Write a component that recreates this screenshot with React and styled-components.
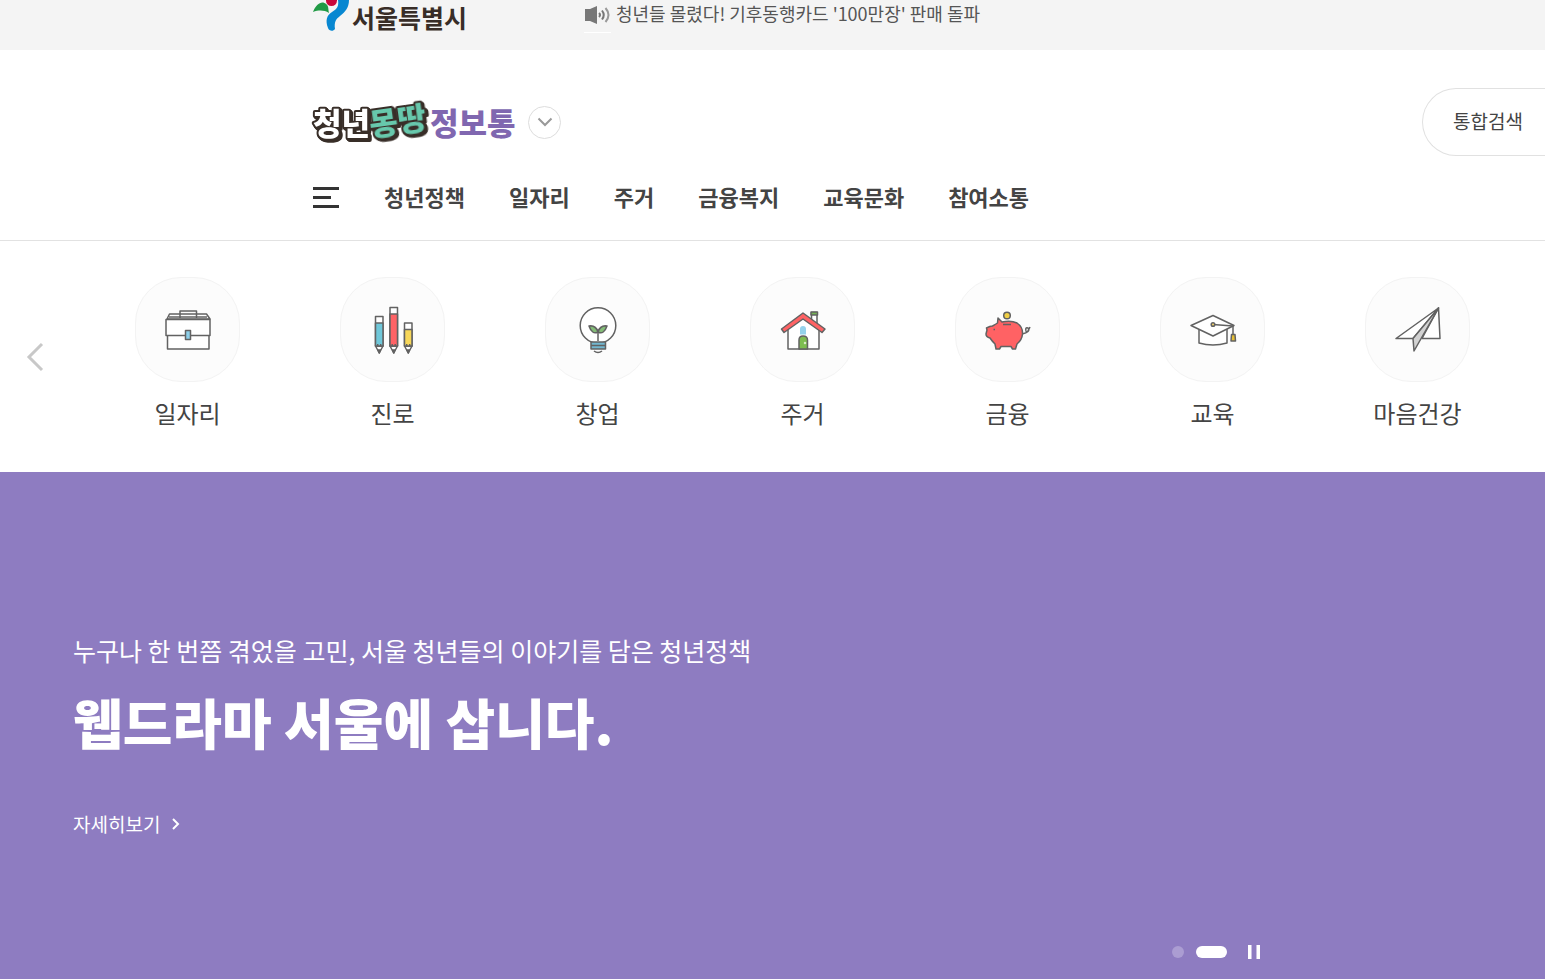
import React from "react";
import styled, { createGlobalStyle } from "styled-components";

const GlobalStyle = createGlobalStyle`
  *, *::before, *::after { box-sizing: border-box; }
  html, body, #root { margin: 0; min-height: 100vh; }
  body {
    background: #fff;
    color: #444;
    font-family: "Noto Sans CJK KR", "Noto Sans", sans-serif;
  }
  a { color: inherit; text-decoration: none; }
  button { padding: 0; border: 0; background: none; font: inherit; color: inherit; cursor: pointer; }
  ul { list-style: none; margin: 0; padding: 0; }
  svg { display: block; }
`;

const Page = styled.div`
  display: flex;
  flex-direction: column;
  min-height: 100vh;
  overflow-x: hidden;
`;

const TopBar = styled.div`
  display: flex;
  align-items: flex-start;
  height: 50px;
  padding-left: 313px;
  background: #f4f4f4;
`;

const CityLink = styled.a`
  display: flex;
  gap: 3px;
  width: 271px;
  height: 34px;
  color: #382d27;
  font-size: 25px;
  font-weight: 700;
  line-height: 34px;
  white-space: nowrap;
`;

const NewsLink = styled.a`
  display: flex;
  gap: 5px;
  color: #555;
  font-size: 18px;
  line-height: 26px;
  white-space: nowrap;
`;

const NewsMark = styled.span`
  width: 27px;
  height: 33px;
  border-bottom: 1px solid #fff;
`;

const Header = styled.header`
  padding: 38px 0 0 313px;
  border-bottom: 1px solid #e2e2e2;
`;

const BrandRow = styled.div`
  display: flex;
  align-items: center;
  height: 68px;
`;

const SiteToggle = styled.button`
  display: grid;
  place-items: center;
  width: 33px;
  height: 33px;
  margin-left: 14px;
  border: 1px solid #ddd;
  border-radius: 50%;
`;

const SearchButton = styled.button`
  width: 123px;
  height: 68px;
  margin-left: auto;
  padding: 0 0 4px 30px;
  border: 1px solid #e1e1e1;
  border-right: 0;
  border-radius: 34px 0 0 34px;
  font-size: 19px;
  text-align: left;
  white-space: nowrap;
`;

const Nav = styled.nav`
  display: flex;
  align-items: center;
  height: 84px;
  padding-bottom: 2px;
`;

const MenuButton = styled.button`
  width: 26px;
  margin-right: 45px;
`;

const NavList = styled.ul`
  display: flex;
  gap: 44px;
  padding-bottom: 2px;
  font-size: 22px;
  font-weight: 700;
  line-height: 30px;
  white-space: nowrap;
`;

const Topics = styled.section`
  display: flex;
  align-items: center;
  height: 231px;
  padding-right: 25px;
`;

const PrevButton = styled.button`
  display: grid;
  place-items: center;
  flex: none;
  width: 69px;
  height: 48px;
  margin-right: 16px;
`;

const TopicList = styled.ul`
  display: grid;
  grid-template-columns: repeat(7, 1fr);
  flex: 1;
  padding-bottom: 6px;
`;

const TopicLink = styled.a`
  display: flex;
  flex-direction: column;
  align-items: center;
  gap: 14px;
  font-size: 24px;
  line-height: 34px;
  white-space: nowrap;
`;

const TopicIcon = styled.span`
  width: 105px;
  height: 105px;
  border: 1px solid #f3f3f3;
  border-radius: 46px;
  background: #fcfcfc;
`;

const Hero = styled.section`
  display: flex;
  flex: 1;
  flex-direction: column;
  justify-content: space-between;
  padding: 158px 285px 20px 73px;
  background: #8e7cc1;
  color: #fff;
`;

const HeroLead = styled.p`
  margin: 0;
  font-size: 25px;
  line-height: 40px;
`;

const HeroTitle = styled.h1`
  margin: 14px 0 46px;
  font-size: 54px;
  font-weight: 900;
  line-height: 76px;
`;

const MoreLink = styled.a`
  display: inline-flex;
  align-items: center;
  gap: 12px;
  font-size: 19px;
  line-height: 36px;
`;

const Controls = styled.div`
  display: flex;
  align-items: center;
  justify-content: flex-end;
  gap: 12px;
`;

const Dot = styled.button`
  width: ${(p) => (p.$active ? 31 : 12)}px;
  height: 12px;
  border-radius: 6px;
  background: ${(p) => (p.$active ? "#fff" : "#ab9dd2")};
`;

const PauseButton = styled.button`
  width: 12px;
  height: 14px;
  margin-left: 9px;
`;

const LogoSvg = styled.svg`
  overflow: visible;
  font-weight: 900;

  .outlined {
    stroke: #382e28;
    stroke-width: 4px;
    stroke-linejoin: round;
    paint-order: stroke;
    filter: drop-shadow(1px 1px 0 #382e28) drop-shadow(1px 1px 0 #382e28);
  }
`;

const CityMark = () => (
  <svg width="36" height="32" viewBox="0 0 36 32" aria-hidden="true">
    <path d="M0 12C3 4 9 0 13 4C16 6 15 9 16 13C11 10 6 10 0 12Z" fill="#219a45" />
    <circle cx="18.5" cy="0.5" r="5.5" fill="#c9073a" />
    <path d="M25 0H36C36 8 32 12 27 16C23 19 21 22 22 29C20 32 16 31 15 28C12 20 14 15 19 12C24 9 26 6 25 0Z" fill="#0787d1" />
  </svg>
);

const Speaker = () => (
  <svg width="27" height="30" viewBox="0 0 27 30" fill="none" stroke="#777" aria-hidden="true">
    <path d="M1 9H6L13 6V24L6 21H1Z" fill="#777" stroke="none" />
    <path d="M15 13Q17 15 15 17" strokeWidth="2" />
    <path d="M18 10.5Q21.500 15 18 19.500" strokeWidth="2" />
    <path d="M21.500 8Q27.500 15 21.500 22" strokeWidth="2" stroke="#999" />
  </svg>
);

const BrandLogo = () => (
  <LogoSvg width="201" height="48" viewBox="0 0 201 48" fontSize="31" role="img" aria-label="청년몽땅정보통">
    <text className="outlined" x="0" y="37" fill="#fff">청년</text>
    <text className="outlined" x="58" y="38" fill="#67c8ac" transform="rotate(-8 58 38)">몽땅</text>
    <text x="117" y="37" fill="#8067b0">정보통</text>
  </LogoSvg>
);

const pencil = (x, top, color) => (
  <g key={x}>
    <path d={`M${x} 69L${x + 3.75} 76L${x + 7.5} 69Z`} fill="#fff" />
    <path d={`M${x + 2.5} 73L${x + 3.75} 76L${x + 5} 73Z`} fill="#555" />
    <path d={`M${x} ${top}H${x + 7.5}V69H${x}Z`} fill="#fff" />
    <path d={`M${x} ${top + 6.500}H${x + 7.5}V69H${x}Z`} fill={color} />
    <path d={`M${x + 2.2} 69V67M${x + 5.2} 69V67`} />
  </g>
);

const drawings = {
  job: (
    <>
      <path d="M32 42L34.500 37H71.500L75 42Z" fill="#fff" />
      <path d="M45 41V34H61.500V41M34 40H72" />
      <path d="M32.500 58H74V72H32.500Z" fill="#fff" />
      <path d="M31 42.500H75V58.500H31Z" fill="#fff" />
      <path d="M50.500 53.500H55.500V62.500H50.500Z" fill="#8dcfe9" />
    </>
  ),
  career: (
    <>
      {pencil(35.5, 39.5, "#6fc7d9")}
      {pencil(50, 30.5, "#ff6366")}
      {pencil(64.5, 46, "#f7d759")}
    </>
  ),
  startup: (
    <>
      <circle cx="53" cy="48.500" r="17.800" fill="#fff" />
      <path d="M53 64V54M49 74Q53 77 57 74" />
      <path d="M53 55Q47 58 44 49Q51 48 53 55ZM53 55Q59 58 62 49Q55 48 53 55Z" fill="#84bd78" />
      <path d="M46 65H60.500V72H46Z" fill="#73b7cf" />
      <path d="M46 68.500H60.500" />
    </>
  ),
  home: (
    <>
      <path d="M61.500 35.500H67V48H61.500Z" fill="#fff" />
      <path d="M61 35H67.500V38H61Z" fill="#76b455" />
      <path d="M38 51L53 40L69 51V72H38Z" fill="#fff" />
      <path d="M31.500 52L53 36L75 52L72 55.500L53 42L34 55.500Z" fill="#ff6264" />
      <path d="M50 57.500V52Q50 49 53 49Q56 49 56 52V57.500Z" fill="#94d2eb" stroke="none" />
      <path d="M49 72V63Q49 59 53 59Q57.500 59 57.500 63V72Z" fill="#7dbd50" />
      <circle cx="55" cy="66" r="0.500" stroke="#dcecc9" />
    </>
  ),
  finance: (
    <>
      <circle cx="52" cy="38.500" r="3.300" fill="#f0cf45" />
      <path d="M67 57Q76 55 73 51Q70 50 71 54Q72 57 75 50" />
      <path d="M43 41L47 45Q56 43 62 46Q68 50 67.500 57Q67 63 62 67L60.500 72H57.500L56 69.500H46L44.500 72H41L40 67Q37 64 35 61Q31 60 31 57L32 53L31.500 51Q35 49 37.500 49Q41 47 42.500 46Z" fill="#ff6264" />
      <path d="M48 47.500H56M38.500 52.500H40" />
    </>
  ),
  education: (
    <>
      <path d="M39 51V66Q53 70 67 66V51Z" fill="#fff" />
      <path d="M31 48.500L53 38.500L74 48.500L53 59Z" fill="#fff" />
      <path d="M53 47.500L73 49V58" />
      <circle cx="53" cy="47.500" r="1.800" fill="#f0cf68" />
      <path d="M71.500 57.500H75L75.500 64H71Z" fill="#e6bf35" />
    </>
  ),
  mind: (
    <>
      <path d="M73.500 31L75 61.500H57Z" fill="#fff" />
      <path d="M73.500 31L31 61.500H48Z" fill="#fff" />
      <path d="M73.500 31L48 61.500L49 74Z" fill="#d2d2d2" />
    </>
  ),
};

const topics = [
  ["job", "일자리"],
  ["career", "진로"],
  ["startup", "창업"],
  ["home", "주거"],
  ["finance", "금융"],
  ["education", "교육"],
  ["mind", "마음건강"],
];

const menu = ["청년정책", "일자리", "주거", "금융복지", "교육문화", "참여소통"];

export default function App() {
  return (
    <Page>
      <GlobalStyle />
      <TopBar>
        <CityLink href="#seoul">
          <CityMark />
          서울특별시
        </CityLink>
        <NewsLink href="#news">
          <NewsMark>
            <Speaker />
          </NewsMark>
          청년들 몰렸다! 기후동행카드 '100만장' 판매 돌파
        </NewsLink>
      </TopBar>

      <Header>
        <BrandRow>
          <a href="#home">
            <BrandLogo />
          </a>
          <SiteToggle type="button" aria-label="관련 사이트">
            <svg width="16" height="10" viewBox="0 0 16 10" fill="none" stroke="#999" strokeWidth="2" aria-hidden="true">
              <path d="M1.500 1.500L8 8L14.500 1.500" />
            </svg>
          </SiteToggle>
          <SearchButton type="button">통합검색</SearchButton>
        </BrandRow>
        <Nav>
          <MenuButton type="button" aria-label="전체메뉴">
            <svg width="26" height="21" viewBox="0 0 26 21" fill="#333" aria-hidden="true">
              <path d="M0 0H26V3H0ZM0 9H18V12H0ZM0 18H26V21H0Z" />
            </svg>
          </MenuButton>
          <NavList>
            {menu.map((name) => (
              <li key={name}>
                <a href={`#${name}`}>{name}</a>
              </li>
            ))}
          </NavList>
        </Nav>
      </Header>

      <Topics>
        <PrevButton type="button" aria-label="이전">
          <svg width="18" height="30" viewBox="0 0 18 30" fill="none" stroke="#c8c8c8" strokeWidth="3" aria-hidden="true">
            <path d="M16 2L3 15L16 28" />
          </svg>
        </PrevButton>
        <TopicList>
          {topics.map(([key, name]) => (
            <li key={key}>
              <TopicLink href={`#${key}`}>
                <TopicIcon>
                  <svg width="103" height="103" viewBox="1 1 103 103" fill="none" stroke="#626262" strokeWidth="1.5" strokeLinejoin="round" aria-hidden="true">
                    {drawings[key]}
                  </svg>
                </TopicIcon>
                {name}
              </TopicLink>
            </li>
          ))}
        </TopicList>
      </Topics>

      <Hero>
        <div>
          <HeroLead>누구나 한 번쯤 겪었을 고민, 서울 청년들의 이야기를 담은 청년정책</HeroLead>
          <HeroTitle>웹드라마 서울에 삽니다.</HeroTitle>
          <MoreLink href="#more">
            자세히보기
            <svg width="8" height="12" viewBox="0 0 8 12" fill="none" stroke="#fff" strokeWidth="2" aria-hidden="true">
              <path d="M1 1L6 6L1 11" />
            </svg>
          </MoreLink>
        </div>
        <Controls>
          <Dot type="button" aria-label="1번 배너" />
          <Dot type="button" aria-label="2번 배너" $active />
          <PauseButton type="button" aria-label="정지">
            <svg width="12" height="14" viewBox="0 0 12 14" aria-hidden="true">
              <path d="M0 0H4V14H0ZM8 0H12V14H8Z" fill="#fff" />
              <path d="M3 0H4V14H3ZM8 0H9V14H8Z" fill="#c9bfe3" />
            </svg>
          </PauseButton>
        </Controls>
      </Hero>
    </Page>
  );
}
